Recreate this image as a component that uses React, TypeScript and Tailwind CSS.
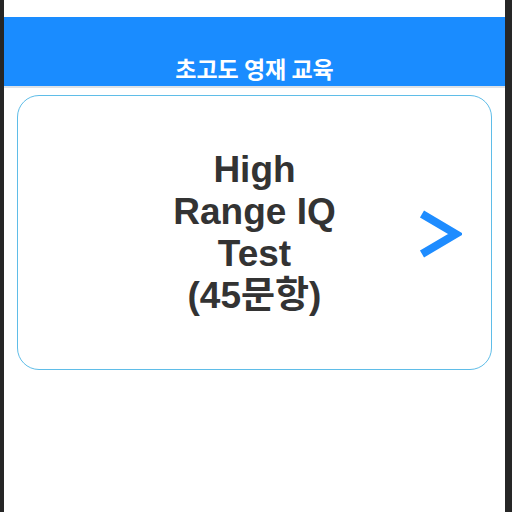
function Chevron() {
  return (
    <svg width="44" height="48" viewBox="0 0 44 48" fill="none" aria-hidden="true">
      <path d="M4 4 L38 24 L4 44" stroke="#1e8cff" strokeWidth="8" strokeLinejoin="miter" />
    </svg>
  );
}

export default function App() {
  return (
    <div
      className="flex h-[512px] w-[512px] overflow-hidden bg-[#262626]"
      style={{ fontFamily: '"Liberation Sans", "Noto Sans CJK KR", sans-serif' }}
    >
      <div className="ml-[4px] flex w-[501px] flex-col bg-white">
        {/* Header */}
        <div className="mt-[17px] flex h-[69px] items-end justify-center bg-[#1a8cff] pb-[4px]">
          <h1 className="text-[23px] font-bold leading-[28px] text-white [font-family:'Noto_Sans_CJK_KR',sans-serif]">
            초고도 영재 교육
          </h1>
        </div>
        <div className="h-[2px] bg-[#dde2e8]" />

        {/* Card */}
        <div className="mx-[13px] mt-[7px] grid h-[275px] grid-cols-[1fr_auto_1fr] items-center rounded-[22px] border border-[#5fbde8]">
          <div />
          <p className="w-[180px] break-keep text-center text-[37px] font-bold leading-[42px] text-[#333333]">
            High Range IQ Test (45문항)
          </p>
          <div className="flex justify-end pr-[29px] pt-[2px]">
            <Chevron />
          </div>
        </div>
      </div>
    </div>
  );
}
